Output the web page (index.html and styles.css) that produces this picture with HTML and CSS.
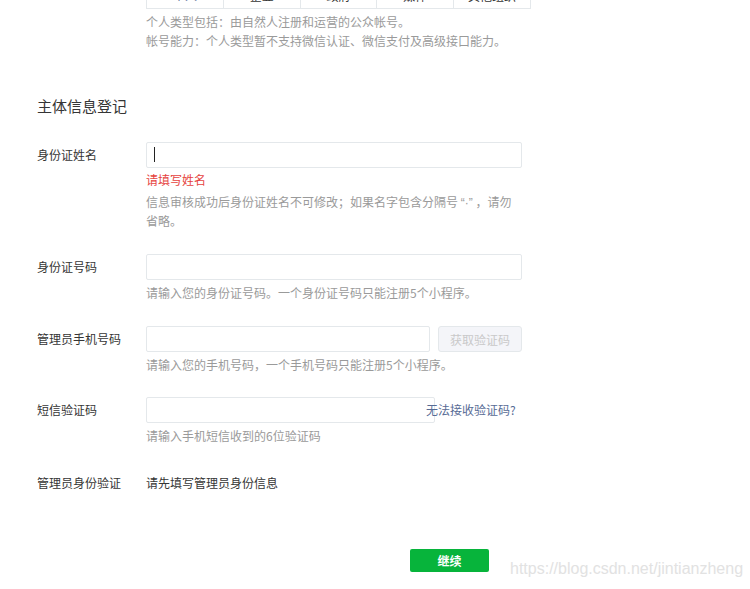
FILE: index.html
```html
<!DOCTYPE html>
<html lang="zh-CN">
<head>
<meta charset="utf-8">
<title>主体信息登记</title>
<link rel="stylesheet" href="styles.css">
</head>
<body>
<div class="page">
  <div class="type-block">
    <div class="tabs">
      <span class="tab active">个人</span>
      <span class="tab">企业</span>
      <span class="tab">政府</span>
      <span class="tab">媒体</span>
      <span class="tab">其他组织</span>
    </div>
    <p class="tip">个人类型包括：由自然人注册和运营的公众帐号。</p>
    <p class="tip">帐号能力：个人类型暂不支持微信认证、微信支付及高级接口能力。</p>
  </div>

  <h2 class="section-title">主体信息登记</h2>

  <div class="row first">
    <label class="label">身份证姓名</label>
    <div class="field">
      <div class="input-wrap">
        <input class="input" type="text">
        <span class="caret"></span>
      </div>
      <p class="error">请填写姓名</p>
      <p class="tip spaced">信息审核成功后身份证姓名不可修改；如果名字包含分隔号 <span class="latin">“·”</span> ，请勿省略。</p>
    </div>
  </div>

  <div class="row r2">
    <label class="label">身份证号码</label>
    <div class="field">
      <input class="input" type="text">
      <p class="tip spaced">请输入您的身份证号码。一个身份证号码只能注册5个小程序。</p>
    </div>
  </div>

  <div class="row r3">
    <label class="label">管理员手机号码</label>
    <div class="field">
      <div class="inline">
        <input class="input phone" type="text">
        <button class="btn-code" disabled>获取验证码</button>
      </div>
      <p class="tip spaced">请输入您的手机号码，一个手机号码只能注册5个小程序。</p>
    </div>
  </div>

  <div class="row r4">
    <label class="label">短信验证码</label>
    <div class="field">
      <div class="inline">
        <input class="input sms" type="text">
        <a class="link" href="#">无法接收验证码?</a>
      </div>
      <p class="tip spaced">请输入手机短信收到的6位验证码</p>
    </div>
  </div>

  <div class="row plain">
    <label class="label">管理员身份验证</label>
    <div class="field">
      <span class="text">请先填写管理员身份信息</span>
    </div>
  </div>

  <div class="footer">
    <button class="btn-primary">继续</button>
  </div>
</div>
<div class="watermark">https://blog.csdn.net/jintianzheng</div>
</body>
</html>
```

FILE: styles.css
```css
* { box-sizing: border-box; }
html, body {
  margin: 0;
  padding: 0;
  background: #fff;
}
body {
  font-family: "Microsoft YaHei", "Noto Sans CJK SC", "Noto Sans", sans-serif;
  font-size: 12px;
  color: #353535;
  overflow: hidden;
  height: 589px;
  position: relative;
}
p { margin: 0; }

.page {
  padding-left: 37px;
}

.type-block {
  margin-left: 109px;
  width: 385px;
}
.tabs {
  display: flex;
  margin-top: -16px;
  height: 25px;
  width: 385px;
  border: 1px solid #e4e8eb;
}
.tab {
  flex: 1;
  text-align: center;
  line-height: 22px;
  font-size: 12px;
  color: #353535;
  border-left: 1px solid #e4e8eb;
}
.tab:first-child { border-left: none; }
.tab.active { color: #576b95; }

.tip {
  color: #9a9a9a;
  line-height: 18px;
  font-size: 12px;
}
.type-block .tip { line-height: 19px; }
.type-block .tabs + .tip { margin-top: 3px; }
.latin {
  font-family: "Liberation Sans", Arial, sans-serif;
}

.section-title {
  margin: 45px 0 0;
  font-size: 15px;
  font-weight: normal;
  color: #353535;
  line-height: 22px;
}

.row {
  display: flex;
  align-items: flex-start;
}
.row.first { margin-top: 25px; }
.row.r2 { margin-top: 24px; }
.row.r3 { margin-top: 24px; }
.row.r4 { margin-top: 23px; }
.row.plain { margin-top: 25px; }

.label {
  width: 109px;
  flex: none;
  line-height: 26px;
  color: #353535;
}
.field {
  width: 376px;
}
.input-wrap {
  position: relative;
}
.input {
  display: block;
  width: 376px;
  height: 26px;
  margin: 0;
  padding: 0 8px;
  border: 1px solid #e4e8eb;
  border-radius: 2px;
  background: #fff;
  outline: none;
  font: inherit;
}
.caret {
  position: absolute;
  left: 8px;
  top: 5px;
  width: 1px;
  height: 15px;
  background: #222;
}
.error {
  margin-top: 3px;
  color: #e64340;
  line-height: 18px;
}
.spaced { margin-top: 4px; }

.inline {
  display: flex;
  align-items: center;
  position: relative;
}
.input.phone { width: 285px; }
.input.sms { width: 289px; }
.btn-code {
  margin-left: 8px;
  width: 84px;
  height: 26px;
  padding: 0;
  border: 1px solid #e4e8eb;
  border-radius: 3px;
  background: #f4f5f9;
  color: #c9c9c9;
  font: inherit;
  font-size: 12px;
}
.link {
  margin-left: -9px;
  color: #576b95;
  text-decoration: none;
  font-size: 12px;
  line-height: 26px;
}

.text {
  display: block;
  line-height: 26px;
  color: #353535;
}

.footer {
  margin-top: 53px;
  padding-left: 373px;
}
.btn-primary {
  width: 79px;
  height: 23px;
  padding: 0;
  border: none;
  border-radius: 2px;
  background: #07b43b;
  color: #fff;
  font: inherit;
  font-size: 12px;
  font-weight: bold;
}

.watermark {
  position: absolute;
  left: 510px;
  top: 560px;
  font-family: "Liberation Sans", Arial, sans-serif;
  font-size: 16px;
  color: #e2e2e2;
  white-space: nowrap;
}
```
